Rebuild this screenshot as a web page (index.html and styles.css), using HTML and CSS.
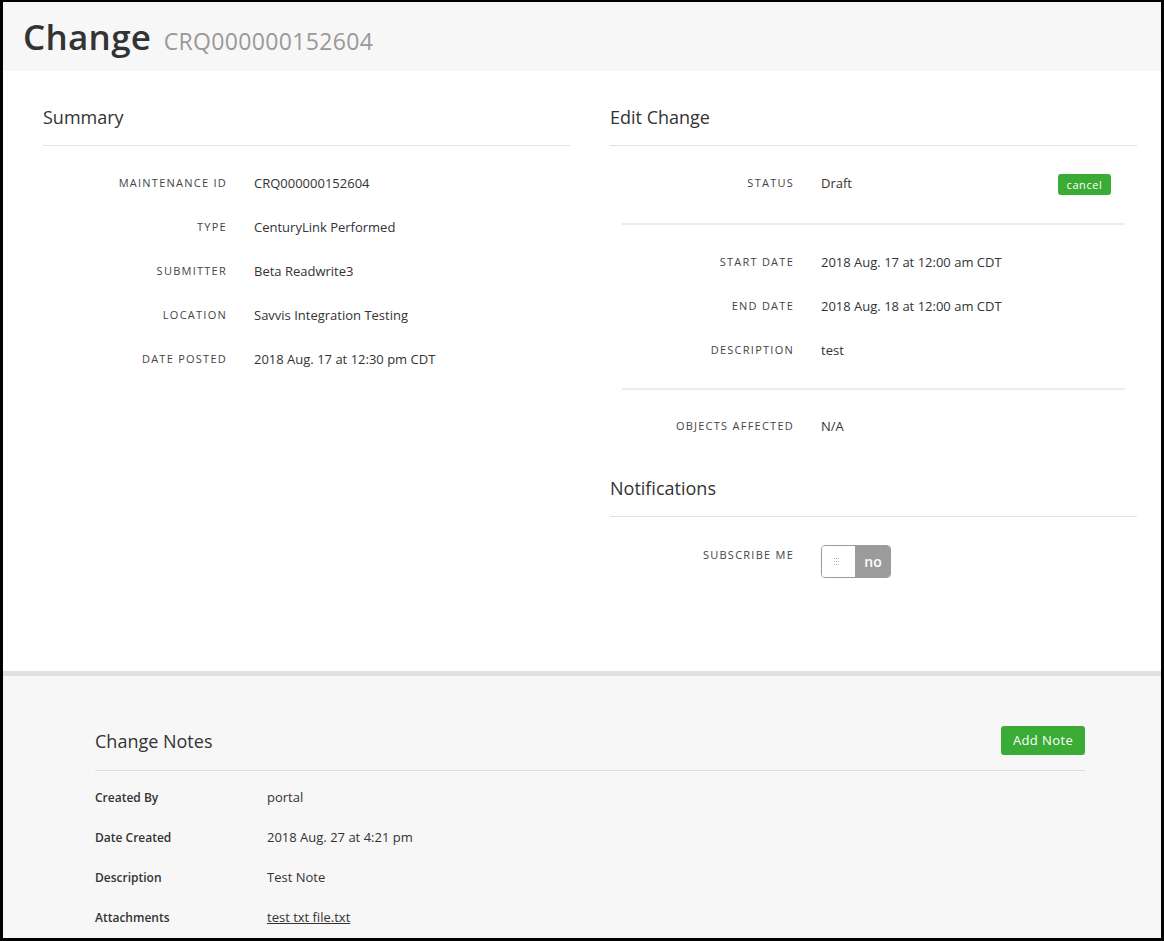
FILE: index.html
```html
<!DOCTYPE html>
<html lang="en">
<head>
<meta charset="utf-8">
<title>Change CRQ000000152604</title>
<link rel="stylesheet" href="styles.css">
</head>
<body>
<div class="frame">
  <header class="page-header">
    <h1 class="page-title">Change <span class="page-subtitle">CRQ000000152604</span></h1>
  </header>

  <main class="detail">
    <section class="panel">
      <h2 class="section-title">Summary</h2>
      <dl class="fields">
        <div class="field"><dt class="field-label">Maintenance ID</dt><dd class="field-value">CRQ000000152604</dd></div>
        <div class="field"><dt class="field-label">Type</dt><dd class="field-value">CenturyLink Performed</dd></div>
        <div class="field"><dt class="field-label">Submitter</dt><dd class="field-value">Beta Readwrite3</dd></div>
        <div class="field"><dt class="field-label">Location</dt><dd class="field-value">Savvis Integration Testing</dd></div>
        <div class="field"><dt class="field-label">Date Posted</dt><dd class="field-value">2018 Aug. 17 at 12:30 pm CDT</dd></div>
      </dl>
    </section>

    <section class="panel">
      <h2 class="section-title">Edit Change</h2>
      <dl class="fields">
        <div class="field">
          <dt class="field-label">Status</dt>
          <dd class="field-value field-value-action">Draft <button class="btn btn-sm" type="button">cancel</button></dd>
        </div>
      </dl>
      <hr class="divider divider-lead">
      <dl class="fields">
        <div class="field"><dt class="field-label">Start Date</dt><dd class="field-value">2018 Aug. 17 at 12:00 am CDT</dd></div>
        <div class="field"><dt class="field-label">End Date</dt><dd class="field-value">2018 Aug. 18 at 12:00 am CDT</dd></div>
        <div class="field"><dt class="field-label">Description</dt><dd class="field-value">test</dd></div>
      </dl>
      <hr class="divider">
      <dl class="fields">
        <div class="field"><dt class="field-label">Objects Affected</dt><dd class="field-value">N/A</dd></div>
      </dl>

      <h2 class="section-title section-title-spaced">Notifications</h2>
      <dl class="fields fields-loose">
        <div class="field">
          <dt class="field-label">Subscribe Me</dt>
          <dd class="field-value">
            <span class="toggle" role="switch" aria-checked="false">
              <span class="toggle-knob">
                <svg class="grip" width="6" height="7" viewBox="0 0 6 7" aria-hidden="true">
                  <g fill="#b5b5b5">
                    <rect x="0" y="0" width="1" height="1"/><rect x="2" y="0" width="1" height="1"/><rect x="4" y="0" width="1" height="1"/>
                    <rect x="0" y="3" width="1" height="1"/><rect x="2" y="3" width="1" height="1"/><rect x="4" y="3" width="1" height="1"/>
                    <rect x="0" y="6" width="1" height="1"/><rect x="2" y="6" width="1" height="1"/><rect x="4" y="6" width="1" height="1"/>
                  </g>
                </svg>
              </span>
              <span class="toggle-off">no</span>
            </span>
          </dd>
        </div>
      </dl>
    </section>
  </main>

  <section class="notes">
    <div class="notes-inner">
      <div class="notes-head">
        <h2 class="notes-title">Change Notes</h2>
        <button class="btn btn-md" type="button">Add Note</button>
      </div>
      <dl class="note">
        <div class="note-row"><dt class="note-label">Created By</dt><dd class="note-value">portal</dd></div>
        <div class="note-row"><dt class="note-label">Date Created</dt><dd class="note-value">2018 Aug. 27 at 4:21 pm</dd></div>
        <div class="note-row"><dt class="note-label">Description</dt><dd class="note-value">Test Note</dd></div>
        <div class="note-row"><dt class="note-label">Attachments</dt><dd class="note-value"><a class="note-link" href="#">test txt file.txt</a></dd></div>
      </dl>
    </div>
  </section>
</div>
</body>
</html>
```

FILE: styles.css
```css
* { box-sizing: border-box; }

html, body {
  margin: 0;
  padding: 0;
  height: 100%;
  overflow: hidden;
}

body {
  font-family: "Open Sans", "Noto Sans", sans-serif;
  color: #333;
  font-size: 13px;
  background: #000;
}

.frame {
  height: 100vh;
  border-style: solid;
  border-color: #000;
  border-width: 2px 3px 3px 3px;
  background: #fff;
  display: flex;
  flex-direction: column;
  overflow: hidden;
}

/* header */
.page-header {
  background: #f7f7f7;
  height: 69px;
  padding: 12px 0 0 20px;
  flex: none;
}

.page-title {
  margin: 0;
  font-size: 35px;
  font-weight: 600;
  line-height: 46px;
  color: #333;
  letter-spacing: 0.3px;
}

.page-subtitle {
  font-size: 23px;
  font-weight: 400;
  color: #999;
  margin-left: 3px;
  letter-spacing: 0.35px;
}

/* main detail */
.detail {
  flex: none;
  display: grid;
  grid-template-columns: 527px 527px;
  column-gap: 40px;
  padding: 33px 24px 81px 40px;
  background: #fff;
  border-bottom: 5px solid #e0e0e0;
}

.section-title {
  margin: 0;
  font-size: 18px;
  font-weight: 400;
  line-height: 26px;
  padding-bottom: 15px;
  border-bottom: 1px solid #e2e2e2;
  color: #333;
}

.section-title-spaced {
  margin-top: 27px;
}

.fields {
  margin: 15px 0 0;
}

.fields-loose {
  margin-top: 16px;
}

.divider + .fields {
  margin-top: 0;
}

.field {
  display: flex;
  padding: 12px 0;
  line-height: 20px;
}

.field-label {
  width: 184px;
  flex: none;
  text-align: right;
  text-transform: uppercase;
  font-size: 11px;
  letter-spacing: 1.25px;
  color: #444;
  padding-right: 27px;
  box-sizing: content-box;
}

.field-value {
  margin: 0;
  flex: 1;
  font-size: 13px;
  color: #333;
}

.field-value-action {
  display: flex;
  justify-content: space-between;
  align-items: flex-start;
  padding-right: 26px;
}

.divider {
  border: 0;
  height: 2px;
  background: #ececec;
  margin: 16px 12px 14px;
}

.divider-lead {
  margin-top: 18px;
  margin-bottom: 15px;
}

/* buttons */
.btn {
  font-family: inherit;
  border: 0;
  background: #3aab35;
  color: #fff;
  border-radius: 3px;
  cursor: pointer;
}

.btn-sm {
  font-size: 11px;
  letter-spacing: 0.6px;
  height: 21px;
  width: 53px;
  padding: 0;
  margin: 1px 0 -2px;
  line-height: 21px;
}

.btn-md {
  font-size: 13px;
  letter-spacing: 0.4px;
  height: 29px;
  width: 84px;
  padding: 0;
  line-height: 29px;
}

/* toggle */
.toggle {
  display: inline-flex;
  width: 70px;
  height: 33px;
  border: 1px solid #9b9b9b;
  border-radius: 4px;
  overflow: hidden;
  vertical-align: top;
}

.toggle-knob {
  width: 34px;
  background: #fff;
  display: flex;
  align-items: center;
  justify-content: center;
  border-right: 1px solid #9b9b9b;
}

.grip { display: block; margin-left: -4px; }

.toggle-off {
  flex: 1;
  background: #9b9b9b;
  color: #fff;
  font-weight: 600;
  font-size: 14px;
  display: flex;
  align-items: center;
  justify-content: center;
}

/* notes */
.notes {
  flex: 1;
  background: #f7f7f7;
  padding: 50px 76px 0 92px;
}

.notes-head {
  display: flex;
  justify-content: space-between;
  align-items: center;
  padding-bottom: 15px;
  border-bottom: 1px solid #dedede;
}

.notes-title {
  margin: 0;
  font-size: 18px;
  font-weight: 400;
  line-height: 26px;
  color: #333;
}

.note {
  margin: 6px 0 0;
}

.note-row {
  display: flex;
  height: 40px;
  align-items: center;
}

.note-label {
  width: 172px;
  flex: none;
  font-weight: 600;
  font-size: 12px;
  color: #333;
}

.note-value {
  margin: 0;
  font-size: 13px;
  color: #333;
}

.note-link {
  color: #333;
  text-decoration: underline;
}
```
